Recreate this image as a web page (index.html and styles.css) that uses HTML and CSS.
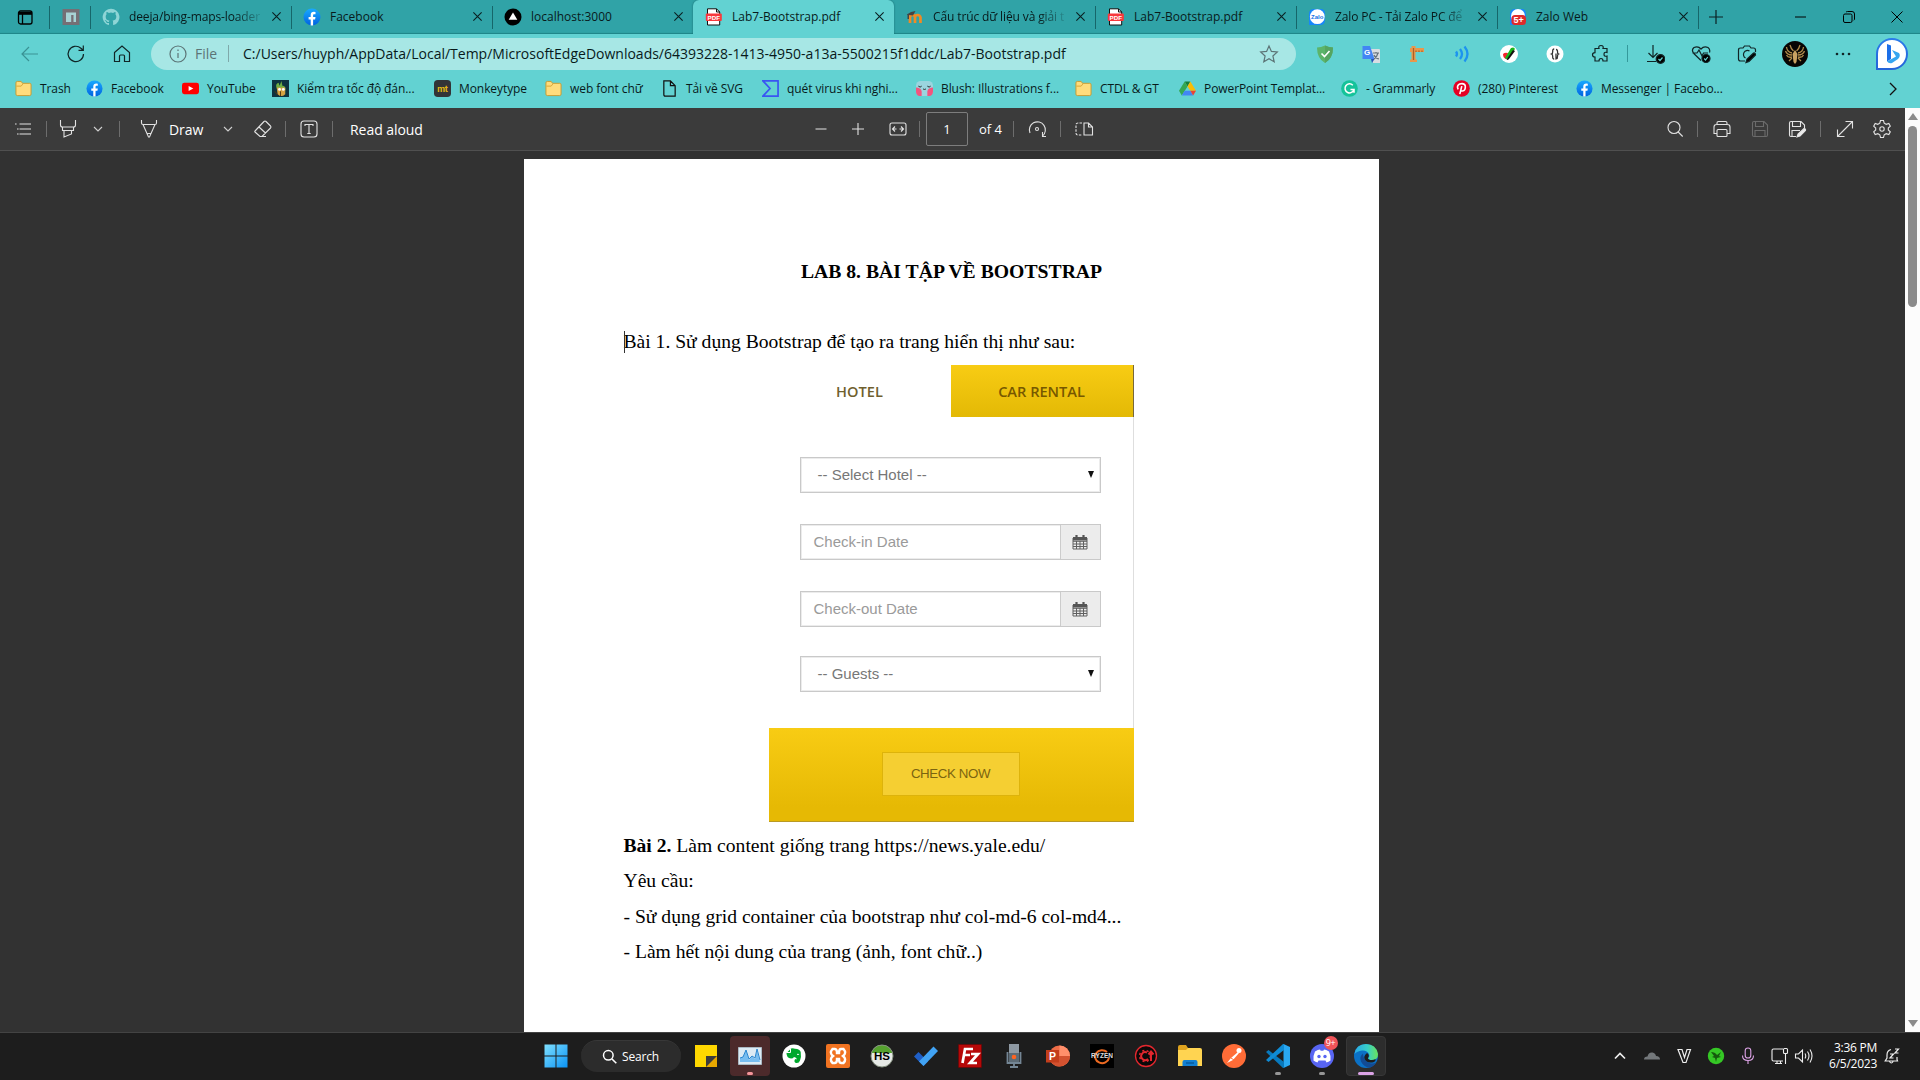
FILE: index.html
```html
<!DOCTYPE html>
<html lang="vi">
<head>
<meta charset="utf-8">
<title>Lab7-Bootstrap.pdf</title>
<link rel="stylesheet" href="styles.css">
</head>
<body>
<svg class="defs" width="0" height="0">
  <defs>
    <linearGradient id="fbg" x1="0" y1="0" x2="0" y2="1"><stop offset="0" stop-color="#19aaff"/><stop offset="1" stop-color="#0062e0"/></linearGradient>
    <linearGradient id="win" x1="0" y1="0" x2="1" y2="1"><stop offset="0" stop-color="#7fe0ff"/><stop offset="1" stop-color="#0a93f5"/></linearGradient>
    <linearGradient id="edge" x1="0" y1="0" x2="1" y2="0"><stop offset="0" stop-color="#2aa9e8"/><stop offset=".55" stop-color="#38cfc8"/><stop offset="1" stop-color="#6ae35a"/></linearGradient>
    <linearGradient id="bing" x1="0" y1="0" x2="0" y2="1"><stop offset="0" stop-color="#2b7bea"/><stop offset="1" stop-color="#2464d8"/></linearGradient>
    <symbol id="fb" viewBox="0 0 18 18"><circle cx="9" cy="9" r="8.5" fill="url(#fbg)"/><path d="M7.7 17.4v-6H5.6V8.9h2.1V7.1c0-2.2 1.2-3.3 3.2-3.3l1.6.1v2.3h-1.2c-1 0-1.2.5-1.2 1.3v1.4h2.4l-.4 2.5h-2v6z" fill="#fff"/></symbol>
    <symbol id="pdf" viewBox="0 0 18 18"><path d="M2.500.8h9l3.200 3.200v13H2.500z" fill="#fff" stroke="#111"/><path d="M11.500.8V4h3.200" fill="none" stroke="#111"/><rect x=".8" y="5.500" width="16" height="7.500" rx="1" fill="#f8383c"/><text x="8.800" y="11.500" font-family="Liberation Sans" font-weight="bold" font-size="6.200" fill="#fff" text-anchor="middle">PDF</text></symbol>
    <symbol id="folder" viewBox="0 0 18 18"><path d="M1 3q0-1.500 1.500-1.500h4L8 3.500h7.500Q17 3.500 17 5v10q0 1.500-1.500 1.500h-13Q1 16.500 1 15z" fill="#ffdc7c" stroke="#c99a2e"/><path d="M1.500 6.500h5l2-2.500" fill="none" stroke="#d9a637"/></symbol>
    <symbol id="close" viewBox="0 0 12 12"><path d="M1.500 1.500l9 9M10.500 1.500l-9 9" fill="none" stroke="#0a2022" stroke-width="1.200"/></symbol>
    <symbol id="chev" viewBox="0 0 10 10"><path d="M1 3l4 4 4-4" fill="none" stroke="#d0d0d0"/></symbol>
    <symbol id="cal" viewBox="0 0 16 16"><path d="M1 4h14v11H1zM1 7.300h14M1 10h14M1 12.500h14M4.500 7v8M8 7v8M11.500 7v8" fill="none" stroke="#606060"/><path d="M1 3h14v3.500H1z" fill="#555"/><path d="M4.500 1v3.500M11.500 1v3.500" stroke="#555" stroke-width="2.200"/></symbol>
  </defs>
</svg>

<header class="tabs">
  <div class="tab-actions"><svg width="17" height="17" viewBox="0 0 17 17"><rect x="1.500" y="2" width="13.500" height="13" rx="2" fill="none" stroke="#000" stroke-width="1.300"/><path d="M2 3h13v2.800H2z"/><path d="M5.500 5v10" stroke="#000" stroke-width="1.300"/></svg></div>
  <div class="tab pinned"><svg width="18" height="18" viewBox="0 0 18 18"><path d="M.5 1h17v16H.5z" fill="#756f75"/><path d="M4 4.500h10V14h-2.500V7H9.200v7H4z" fill="#a7d3d5"/></svg></div>
  <div class="tab"><svg class="fav" viewBox="0 0 18 18"><path d="M9 .8a8.300 8.300 0 0 0-2.600 16.200c.4.100.6-.2.600-.4v-1.700c-2.400.5-2.900-1-2.900-1-.4-1-.9-1.300-.9-1.300-.8-.5 0-.5 0-.5.900 0 1.300.9 1.300.9.800 1.300 2 1 2.500.7 0-.5.300-.9.500-1.100-1.800-.2-3.800-.9-3.800-4.100 0-.9.300-1.600.9-2.200-.1-.2-.4-1.100 0-2.200 0 0 .7-.2 2.300.8a8 8 0 0 1 4.200 0c1.600-1 2.300-.8 2.300-.8.400 1.100.100 2 0 2.200.6.600.9 1.300.9 2.200 0 3.200-2 3.900-3.800 4.100.3.300.6.800.6 1.600v2.400c0 .2.200.5.600.4A8.300 8.300 0 0 0 9 .8z" fill="#8ed5d6"/></svg><span class="tab-title fade">deeja/bing-maps-loader</span><svg class="x"><use href="#close"/></svg></div>
  <div class="tab"><svg class="fav"><use href="#fb"/></svg><span class="tab-title">Facebook</span><svg class="x"><use href="#close"/></svg></div>
  <div class="tab"><svg class="fav" viewBox="0 0 18 18"><circle cx="9" cy="9" r="8.500"/><path d="M9 4.500l4.300 7.300H4.700z" fill="#fff"/></svg><span class="tab-title">localhost:3000</span><svg class="x"><use href="#close"/></svg></div>
  <div class="tab active"><svg class="fav"><use href="#pdf"/></svg><span class="tab-title">Lab7-Bootstrap.pdf</span><svg class="x"><use href="#close"/></svg></div>
  <div class="tab"><svg class="fav" viewBox="0 0 18 18"><path d="M4 15V9.500q0-2.500 2.500-2.500T9 9.500V15M9 9.500Q9 7 11.500 7T14.500 9.500V15" fill="none" stroke="#f08a24" stroke-width="2.700"/><path d="M.8 6.500Q5 3 9.500 3L7 7.500 3 7v4H1.500V7z" fill="#444"/></svg><span class="tab-title fade">Cấu trúc dữ liệu và giải t</span><svg class="x"><use href="#close"/></svg></div>
  <div class="tab"><svg class="fav"><use href="#pdf"/></svg><span class="tab-title">Lab7-Bootstrap.pdf</span><svg class="x"><use href="#close"/></svg></div>
  <div class="tab"><svg class="fav" viewBox="0 0 18 18"><path d="M1 6q0-5 5-5h7q4 0 4 5v6q0 5-5 5H1z" fill="#1787fb"/><circle cx="9.300" cy="8.700" r="7.400" fill="#fff"/><text x="9.200" y="11" font-family="Liberation Sans" font-weight="bold" font-size="6" fill="#1473e6" text-anchor="middle">Zalo</text></svg><span class="tab-title fade">Zalo PC - Tải Zalo PC để</span><svg class="x"><use href="#close"/></svg></div>
  <div class="tab"><svg class="fav" viewBox="0 0 18 18"><path d="M1 6q0-5 5-5h7q4 0 4 5v6q0 5-5 5H1z" fill="#1787fb"/><circle cx="9" cy="8" r="7" fill="#fff"/><rect x="2.500" y="7" width="14.500" height="10" rx="3.500" fill="#df2a2a"/><text x="9.700" y="15" font-family="Liberation Sans" font-weight="bold" font-size="9" fill="#fff" text-anchor="middle">5+</text></svg><span class="tab-title">Zalo Web</span><svg class="x"><use href="#close"/></svg></div>
  <div class="new-tab"><svg width="16" height="16" viewBox="0 0 16 16"><path d="M8 1v14M1 8h14" stroke="#0a2022" stroke-width="1.200"/></svg></div>
  <div class="window-controls">
    <svg viewBox="0 0 14 14"><path d="M1 7h11" stroke="#000"/></svg>
    <svg viewBox="0 0 14 14"><rect x="1.500" y="4" width="8.500" height="8.500" rx="1.500" fill="none" stroke="#000"/><path d="M4 2.200q.5-.7 1.500-.7H10q2.500 0 2.500 2.500V9q0 .8-.7 1.300" fill="none" stroke="#000"/></svg>
    <svg viewBox="0 0 14 14"><path d="M1.500 1.500l11 11M12.500 1.500l-11 11" stroke="#000"/></svg>
  </div>
</header>

<nav class="toolbar">
  <div class="slot dim"><svg viewBox="0 0 20 20"><path d="M18 10H2M9 3l-7 7 7 7"/></svg></div>
  <div class="slot"><svg viewBox="0 0 20 20"><path d="M17.500 10a7.700 7.700 0 1 1-2.600-5.800L17 6M17.300 1.500V6.300h-4.800"/></svg></div>
  <div class="slot"><svg viewBox="0 0 20 20"><path d="M2.500 8.500L10 2l7.500 6.500V17.500h-5V12q0-1-1-1h-3q-1 0-1 1v5.500h-5z"/></svg></div>
  <div class="address">
    <svg viewBox="0 0 20 20"><circle cx="10" cy="10" r="8"/><path d="M10 9v5M10 5.600v1.500"/></svg>
    <span class="scheme">File</span><span class="url">C:/Users/huyph/AppData/Local/Temp/MicrosoftEdgeDownloads/64393228-1413-4950-a13a-5500215f1ddc/Lab7-Bootstrap.pdf</span>
    <svg class="star" viewBox="0 0 20 20"><path d="M10 2l2.400 5.400 5.900.6-4.400 4 1.300 5.800L10 14.800l-5.200 3 1.300-5.800-4.400-4 5.900-.6z"/></svg>
  </div>
  <div class="extensions">
    <div class="slot"><svg class="solid" viewBox="0 0 20 20"><path d="M10 1.500q4 2 8 2 0 11-8 15.500Q2 14.500 2 3.500q4 0 8-2z" fill="#5cb46a"/><path d="M10 1.500q4 2 8 2 0 11-8 15.500z" fill="#55a561"/><path d="M6.500 9.500l3 3 5-5.500" fill="none" stroke="#fff" stroke-width="1.600"/></svg></div>
    <div class="slot"><svg class="solid" viewBox="0 0 20 20"><path d="M7 5h11q1 0 1 1v13h-7z" fill="#d9dde2"/><path d="M1.500 2H9l4.500 13h-12z" fill="#4285f4"/><path d="M10 15h3.500L11 19z" fill="#2850b4"/><text x="3" y="11" font-family="Liberation Sans" font-weight="bold" font-size="8" fill="#fff">G</text><path d="M12 9h6M15 8v1M17 9q-1 4-4 6M13 11q1 3 5 4" fill="none" stroke="#66727d"/></svg></div>
    <div class="slot"><svg class="solid" viewBox="0 0 20 20"><path d="M3 4h14v4H3zM4.500 2h4v14h-4zM3 15.500h7V18H3z" fill="#e9974b"/><path d="M9 8V6.500M12 8V6.500M15 8V6.500M6.500 4v12" stroke="#a5612b"/></svg></div>
    <div class="slot"><svg class="solid" viewBox="0 0 20 20"><path d="M3 7.500q2 2.500 0 5M7 5q4 5 0 10M11.500 2.500q6 7.500 0 15" fill="none" stroke="#1c93ef" stroke-width="2.300"/></svg></div>
    <div class="slot"><svg class="solid" viewBox="0 0 20 20"><circle cx="10" cy="10" r="9" fill="#fff"/><path d="M4 10q2-2 5-1l-2 6q-3-1-3-5z" fill="#f5222d"/><path d="M6 14L12 4q3-1.500 4 1l-7 9q-1.500 2-3 0z" fill="#16b51a"/><path d="M7.500 15.500L14 6l2 1-6 8q-1.500 1.500-2.500.5z" fill="#111"/></svg></div>
    <div class="slot"><svg class="solid" viewBox="0 0 20 20"><circle cx="10" cy="10" r="8.500" fill="#fff"/><path d="M9.200 5Q7.500 5 7.700 7.500 7.800 9.500 6.500 10q1.300.5 1.200 2.500Q7.500 15 9.200 15M11 5.500q1.800.2 1.500 2.500-.1 1.500 1 2-1.100.5-1 2.500.2 2-1.500 2.500V9.500" fill="none" stroke="#333" stroke-width="1.300"/></svg></div>
    <div class="slot"><svg viewBox="0 0 20 20"><path d="M4 4.500h4q-1-3 2-3t2 3h4v4q-3-1-3 1.700t3 1.800v5h-4q0-2.500-2-2.500T8 17H4v-4q-2.500 0-2.500-2.200T4 8.600z"/></svg></div>
  </div>
  <i class="divider"></i>
  <div class="slot"><svg viewBox="0 0 20 20"><path d="M8 1v12M3.500 9L8 13.500 12.500 9M2 17.500h9"/><circle cx="15.500" cy="15" r="4.300" fill="#000"/><path d="M13.500 15l1.500 1.500 2.500-3" stroke="#62d2d2"/></svg></div>
  <div class="slot"><svg viewBox="0 0 20 20"><path d="M10 16.500L2.800 9.500Q0 6 3 3.500 7 1.500 10 5q3-3.500 7-1.500 2.500 2 1.500 5M1.500 9H6l2-3 3 6 1.500-3H17"/><circle cx="15" cy="14.500" r="4" fill="#000"/><path d="M13.200 14.500l1.300 1.500 2.300-3" stroke="#62d2d2"/></svg></div>
  <div class="slot"><svg viewBox="0 0 20 20"><path d="M8 17H3.500Q1.500 17 1.500 15V6q0-2 2-2H6l1.500-2h5L14 4h2.500q2 0 2 2v2M12.500 7a4 4 0 1 0-4 7"/><path d="M9 18.500l1-3.500 6.500-6q2-.5 2 2L12 17.500z" fill="#000"/></svg></div>
  <div class="slot avatar-slot"><svg class="avatar" viewBox="0 0 26 26"><circle cx="13" cy="13" r="13" fill="#080604"/><path d="M10 12Q5 11 4.500 6M10 14Q5 14 3.500 10M10 16q-4 1-5.500-2M16 12q5-1 5.500-6M16 14q5 0 6.500-4M16 16q4 1 5.500-2M8 4q1 4 3.500 6M18 4q-1 4-3.500 6M7 20l3-3M19 20l-3-3" fill="none" stroke="#b08b4a" stroke-width="1.300"/><path d="M13 9l2.500 4-1 8L13 23l-1.500-2-1-8z" fill="#c9a262"/></svg></div>
  <div class="slot dots-slot"><svg class="solid" viewBox="0 0 20 20"><circle cx="4" cy="10" r="1.300"/><circle cx="10" cy="10" r="1.300"/><circle cx="16" cy="10" r="1.300"/></svg></div>
  <div class="slot bing-slot"><svg class="bing" viewBox="0 0 34 34"><path d="M2 32V17A15 15 0 1 1 17 32z" fill="#fff" stroke="url(#bing)" stroke-width="2"/><path d="M12 7l4 1.500V22l-4 2.500z" fill="#1b6fe8"/><path d="M17 13l7 3q2 3-1 6l-6 4q-3 1-5-1.500l9-5z" fill="#35a6f0"/></svg></div>
</nav>

<nav class="bookmarks">
  <a><svg><use href="#folder"/></svg>Trash</a>
  <a><svg><use href="#fb"/></svg>Facebook</a>
  <a><svg viewBox="0 0 18 18"><rect y="3" width="18" height="12" rx="2.500" fill="#f00"/><path d="M7 6.300l5 2.700-5 2.700z" fill="#fff"/></svg>YouTube</a>
  <a><svg viewBox="0 0 18 18"><path d="M0 0h18v18H0z" fill="#0d3340"/><path d="M5 9q-2-5 2-6l1 3 2-5 1 5q4 0 3 5z" fill="#6eae43"/><path d="M5 8h9v7q-4 4-8 0z" fill="#d4a342"/><circle cx="8" cy="10" r="1.500" fill="#fff"/><circle cx="12" cy="10" r="1.500" fill="#fff"/><path d="M9 12v5M3 12l3 4" stroke="#513711"/></svg>Kiểm tra tốc độ đán...</a>
  <a><svg viewBox="0 0 18 18"><rect width="18" height="18" rx="4" fill="#323437"/><text x="9" y="12.500" font-family="Roboto" font-weight="bold" font-size="9.500" fill="#e2b714" text-anchor="middle">mt</text></svg>Monkeytype</a>
  <a><svg><use href="#folder"/></svg>web font chữ</a>
  <a><svg viewBox="0 0 18 18"><path d="M3 1h7l5 5v11H4.500Q3 17 3 15.500zM10 1v5h5" fill="none" stroke="#111" stroke-width="1.300"/></svg>Tải về SVG</a>
  <a><svg viewBox="0 0 18 18"><path d="M1 1h16v16H1l7.500-8z" fill="none" stroke="#3a55f2" stroke-width="1.800"/></svg>quét virus khi nghi...</a>
  <a><svg viewBox="0 0 18 18"><rect y="1" width="18" height="16" rx="5" fill="#9bd5df"/><path d="M0 8q5 0 6 4v5H3q-3-1-3-5zM18 8q-5 0-6 4v5h3q3-1 3-5z" fill="#f2557f"/><path d="M2.500 6.500q2 2 3.500 0M12 6.500q2 2 3.500 0M7.500 9.500q1.500 1 3 0" fill="none" stroke="#222"/></svg>Blush: Illustrations f...</a>
  <a><svg><use href="#folder"/></svg>CTDL &amp; GT</a>
  <a><svg viewBox="0 0 18 18"><path d="M6 1.500h6l-3 5.300z" fill="#188038"/><path d="M6 1.500l3 5.300-6 9.700-3-5z" fill="#34a853"/><path d="M12 1.500l6 10h-6L9 6.800z" fill="#fbbc04"/><path d="M6 11.500h6l3 5H3z" fill="#4285f4"/><path d="M12 11.500h6l-3 5z" fill="#ea4335"/></svg>PowerPoint Templat...</a>
  <a><svg viewBox="0 0 18 18"><circle cx="9" cy="9" r="8.800" fill="#15c39a"/><path d="M12.500 5.500a4.800 4.800 0 1 0 1.200 4.500H10M13.800 10v3.500" fill="none" stroke="#fff" stroke-width="1.600"/></svg>- Grammarly</a>
  <a><svg viewBox="0 0 18 18"><circle cx="9" cy="9" r="8.800" fill="#e60023"/><path d="M5.500 10Q3.500 6 7 4.200q5-1.400 6 2 .5 5-3 5.500-1.500 0-2-1M9.300 6.500L7.200 15" fill="none" stroke="#fff" stroke-width="1.700"/></svg>(280) Pinterest</a>
  <a><svg><use href="#fb"/></svg>Messenger | Facebo...</a>
  <svg class="more" viewBox="0 0 14 14"><path d="M4 1l6 6-6 6" fill="none" stroke="#111" stroke-width="1.300"/></svg>
</nav>

<main class="viewer">
  <div class="viewer-body">
    <div class="pdfbar">
      <div class="group left">
        <div class="cell w46"><svg viewBox="0 0 20 20"><path d="M6.500 5H18M6.500 10H18M6.500 15H18M2 5h1.600M4 10h1.600M4 15h1.600"/></svg></div><i></i>
        <div class="cell w42"><svg viewBox="0 0 20 20"><path d="M2.500 1v5q0 2 2 2h11q2 0 2-2V1M4.500 8v3.500h11V8M6 11.500V18l7.500-3v-3.500"/></svg></div>
        <div class="cell w17"><svg class="chev"><use href="#chev"/></svg></div><i class="after-highlight"></i>
        <div class="cell pen"><svg viewBox="0 0 20 20"><path d="M2.500 1v3q0 1.500 1.500 1.500h12q1.500 0 1.500-1.500V1M4 5.500L9.500 18h1L16 5.500M8 14.500h4"/></svg></div>
        <span class="draw">Draw</span>
        <div class="cell w21"><svg class="chev"><use href="#chev"/></svg></div>
        <div class="cell eraser"><svg viewBox="0 0 20 20"><path d="M2 12L11 2.500q1-1 2 0l4.500 4.500q1 1 0 2L9 17.500H7l-5-4.500q-.5-.5 0-1zM6 8l6.500 6M8 17.500h5"/></svg></div><i class="after-eraser"></i>
        <div class="cell w46"><svg viewBox="0 0 20 20"><rect x="2" y="2" width="16" height="16" rx="3"/><path d="M6 7V5.500h8V7M10 5.500v9M8.300 14.500h3.400"/></svg></div><i></i>
        <span class="read">Read aloud</span>
      </div>
      <div class="group middle">
        <div class="cell w39 faded"><svg viewBox="0 0 20 20"><path d="M4.500 10h11" stroke-width="1.800"/></svg></div>
        <div class="cell w36"><svg viewBox="0 0 20 20"><path d="M10 4v12M4 10h12"/></svg></div>
        <div class="cell w43"><svg viewBox="0 0 20 20"><rect x="2" y="4" width="16" height="12" rx="2"/><path d="M4.500 10h4M11.500 10h4M7 7.500L4.500 10 7 12.500M13 7.500l2.500 2.500-2.500 2.500"/></svg></div><i></i>
        <span class="page-input">1</span><span class="of">of 4</span><i></i>
        <div class="cell w46"><svg viewBox="0 0 20 20"><path d="M3 14A8 8 0 1 1 15.500 17M15.500 13v4.500H19"/><circle cx="10" cy="10" r="1.500"/></svg></div><i></i>
        <div class="cell w46"><svg viewBox="0 0 20 20"><path d="M8 4H4Q2 4 2 6v8q0 2 2 2h4" stroke-dasharray="2.500 1.200"/><path d="M10 4h4.500l4 4v8H10zM14.500 4v4h4"/></svg></div>
      </div>
      <div class="group right">
        <div class="cell w45"><svg viewBox="0 0 20 20"><circle cx="9" cy="8.500" r="6"/><path d="M13.200 13l4.500 4.500"/></svg></div><i></i>
        <div class="cell w47"><svg viewBox="0 0 20 20"><path d="M5 5.500V4q0-1.500 1.500-1.500h7Q15 2.500 15 4v1.500M5 14.500H2V8q0-2.500 2.500-2.500h11Q18 5.500 18 8v6.500h-3"/><rect x="5" y="10.500" width="10" height="7" rx="1"/></svg></div>
        <div class="cell w29 disabled"><svg viewBox="0 0 20 20"><path d="M2.500 4Q2.500 2.500 4 2.500h10l3.500 3.500v10q0 1.500-1.500 1.500H4Q2.500 17.500 2.500 16zM5.500 2.500v5h8v-5M5 17.500v-6h10v6"/></svg></div>
        <div class="cell w46"><svg viewBox="0 0 20 20"><path d="M9 17.500H4Q2.500 17.500 2.500 16V4Q2.500 2.500 4 2.500h10l3.500 3.500v3M5.500 2.500v5h8v-5M5 17.500v-6h8"/><path d="M10 18l1-3 6-5.500q2 0 1.500 2L13 17z" fill="#eee"/></svg></div><i></i>
        <div class="cell w48"><svg viewBox="0 0 20 20"><path d="M2.500 17.500l15-15M10.500 2.500h7v7M2.500 10.500v7h7"/></svg></div>
        <div class="cell w25"><svg viewBox="0 0 20 20"><path d="M8.500 1.500h3l.7 2.700 2 1.100 2.600-.8 1.500 2.700-2 1.800v2l2 1.800-1.500 2.700-2.600-.8-2 1.100-.7 2.700h-3l-.7-2.700-2-1.100-2.600.8-1.500-2.700 2-1.800V9l-2-1.800 1.500-2.700 2.600.8 2-1.100z"/><circle cx="10" cy="10" r="2.200"/></svg></div>
      </div>
    </div>
    <div class="canvas">
      <article class="page">
        <h1>LAB 8. BÀI TẬP VỀ BOOTSTRAP</h1>
        <p class="first">Bài 1. Sử dụng Bootstrap để tạo ra trang hiển thị như sau:</p>
        <section class="booking">
          <div class="booking-tabs"><span>HOTEL</span><span class="selected">CAR RENTAL</span></div>
          <div class="booking-form">
            <div class="field select"><span>-- Select Hotel --</span><b></b></div>
            <div class="field date"><span>Check-in Date</span><em><svg><use href="#cal"/></svg></em></div>
            <div class="field date"><span>Check-out Date</span><em><svg><use href="#cal"/></svg></em></div>
            <div class="field select guests"><span>-- Guests --</span><b></b></div>
          </div>
          <div class="booking-footer"><span>CHECK NOW</span></div>
        </section>
        <p><strong>Bài 2.</strong> Làm content giống trang https://news.yale.edu/</p>
        <p>Yêu cầu:</p>
        <p>- Sử dụng grid container của bootstrap như col-md-6 col-md4...</p>
        <p>- Làm hết nội dung của trang (ảnh, font chữ..)</p>
      </article>
    </div>
  </div>
  <div class="scrollbar"><i class="up"></i><i class="thumb"></i><i class="down"></i></div>
</main>

<footer class="taskbar">
  <div class="apps">
    <div class="start"><svg width="24" height="24" viewBox="0 0 24 24"><path d="M.5.500h11v11H.5zM12.500.500h11v11h-11zM.5 12.500h11v11H.5zM12.500 12.500h11v11h-11z" fill="url(#win)"/></svg></div>
    <div class="search"><svg width="15" height="15" viewBox="0 0 15 15"><circle cx="6.300" cy="6.300" r="4.800" fill="none" stroke="#fff" stroke-width="1.500"/><path d="M10 10l4.300 4.300" stroke="#fff" stroke-width="1.600"/></svg>Search</div>
    <div class="app"><svg viewBox="0 0 24 24"><path d="M1 1h22v22H1z" fill="#ffd800"/><path d="M12 12h11v11H12z" fill="#e8a800"/><path d="M12 12h11L12 23z" fill="#3c3c3c"/></svg></div>
    <div class="app hot"><svg viewBox="0 0 24 24"><path d="M.5 3.500h23v17H.5z" fill="#dceaf4" stroke="#aab8c3"/><path d="M2 18v-4l3-1 3-7 3 10 3-4 3 3 2-9 3 12z" fill="#78bdf0"/><path d="M2 14l3-1 3-7 3 9 3-3 3 2 2-9 3 11" fill="none" stroke="#2b86cf"/></svg><u></u></div>
    <div class="app"><svg viewBox="0 0 24 24"><circle cx="12" cy="12" r="11.500" fill="#fff"/><path d="M4.500 9L9 4.500q2-.8 4 .2 5 .3 5.700 3.300.8 5-.7 8.500-1 3-4 2.500-2.300-1-1.200-3.500 1-1 2.200 0-.5-2.500-3-2.500-1 1.500-3 1.500Q4.500 14 4.500 9z" fill="#00a82d"/><path d="M4.500 8.500h4V5" fill="none" stroke="#fff"/><path d="M15 10.500q1.500-1 2 .5" fill="none" stroke="#fff"/></svg></div>
    <div class="app"><svg viewBox="0 0 24 24"><rect width="24" height="24" rx="2" fill="#f17321"/><path d="M9 5H6.500Q3 9 7 12q-4 3-.5 7H9q2 0 2-4h2q0 4 2 4h2.500q3.500-4-.5-7 4-3 .5-7H15q-2 0-2 4h-2q0-4-2-4z" fill="none" stroke="#fff" stroke-width="2.400"/></svg></div>
    <div class="app"><svg viewBox="0 0 24 24"><circle cx="12" cy="12" r="11" fill="#e6e9e6"/><path d="M1.500 9Q4 1 12 1t10.500 8z" fill="#55a12e"/><circle cx="12" cy="12" r="11" fill="none" stroke="#84907f"/><text x="12" y="16" font-family="Liberation Sans" font-weight="bold" font-size="11.500" text-anchor="middle">HS</text></svg></div>
    <div class="app"><svg viewBox="0 0 24 24"><path d="M0 12.500L4.500 8 14 17.500l-4.500 4.500z" fill="#1f5fc7"/><path d="M5 17.500L19.500 2.500 24 7 9.500 22z" fill="#41a3f4"/></svg></div>
    <div class="app"><svg viewBox="0 0 24 24"><path d="M.5.500h23v23H.5z" fill="#b60808" stroke="#6b0000" stroke-dasharray="1 1"/><path d="M4.500 19L7 5h8M6 11h6M13 10h7l-8 9h7" fill="none" stroke="#fff" stroke-width="2.700"/></svg></div>
    <div class="app"><svg viewBox="0 0 24 24"><path d="M7 0h10v18H7z" fill="#8e99a3"/><path d="M5.500 8v11h13V8M12 19v4M8 23h8" fill="none" stroke="#748695" stroke-width="1.800"/><path d="M7 9h10v9H7z" fill="#5d6b76"/><circle cx="12" cy="13" r="2.300" fill="#ff6421"/></svg></div>
    <div class="app"><svg viewBox="0 0 24 24"><circle cx="13.500" cy="12" r="10.500" fill="#ed6c47"/><path d="M13.500 1.500A10.500 10.500 0 0 1 24 12H13.500z" fill="#ff8f6b"/><path d="M24 12a10.500 10.500 0 0 1-19 6l8.500-6z" fill="#d35230"/><path d="M0 6h13v12.500H0z" fill="#c43e1c"/><text x="6.500" y="16.200" font-family="Liberation Sans" font-weight="bold" font-size="10.500" fill="#fff" text-anchor="middle">P</text></svg></div>
    <div class="app"><svg viewBox="0 0 24 24"><path d="M0 0h24v24H0z"/><path d="M17 8A7 6.500 0 1 0 19 14" fill="none" stroke="#ed6a22" stroke-width="2"/><text x="12" y="14.300" font-family="Liberation Sans" font-weight="bold" font-size="6.500" fill="#ddd" text-anchor="middle" textLength="22">RYZEN</text></svg></div>
    <div class="app"><svg viewBox="0 0 24 24"><circle cx="12" cy="12" r="10.500" fill="#0c0909" stroke="#e3272e" stroke-width="1.300"/><path d="M13 8.500a4 4 0 1 0 1 6.500M17 17V8M14.500 10.500L17 7.500l2.500 3" fill="none" stroke="#e3272e" stroke-width="2"/><circle cx="11" cy="12" r="5.500" fill="none" stroke="#e3272e" stroke-width="1.500" stroke-dasharray="2 2.500"/></svg></div>
    <div class="app"><svg viewBox="0 0 24 24"><path d="M0 3q0-2 2-2h6l2 3h12v7H0z" fill="#dfa31e"/><path d="M0 6h8l2-2h12q2 0 2 2v16H0z" fill="#ffd451"/><path d="M4.500 22v-4q0-2 2-2h11q2 0 2 2v4z" fill="#1280d2"/><path d="M8 19h8" stroke="#075b9d" stroke-width="1.500"/></svg></div>
    <div class="app"><svg viewBox="0 0 24 24"><circle cx="12" cy="12" r="12" fill="#ff6c37"/><path d="M5 19l4-5 7-6 1 1-6 7z" fill="#fff"/><circle cx="17" cy="6.500" r="2.500" fill="#fff"/><path d="M9 14l3 2" stroke="#ff6c37"/></svg></div>
    <div class="app"><svg viewBox="0 0 24 24"><path d="M17.500 0L24 3v18l-6.500 3z" fill="#29a8f2"/><path d="M0 8l2.500-2L18 18v6h-1z" fill="#0879bd"/><path d="M0 16l2.500 2L18 6V0h-1z" fill="#0f8bd4"/></svg><u class="dim-dot"></u></div>
    <div class="app"><svg viewBox="0 0 24 24"><circle cx="12" cy="12" r="12" fill="#5865f2"/><path d="M5 7.500q3-2 5-2l.7 1.300h2.600L14 5.500q2 0 5 2 2 4 1.500 9-2 1.500-4 2l-1-2H8.500l-1 2q-2-.5-4-2Q3 11.500 5 7.500z" fill="#fff"/><circle cx="9" cy="12.500" r="1.700" fill="#5865f2"/><circle cx="15" cy="12.500" r="1.700" fill="#5865f2"/></svg><span class="badge">9+</span><u class="dim-dot"></u></div>
    <div class="app current"><svg viewBox="0 0 24 24"><circle cx="12" cy="12" r="12" fill="#0b71c6"/><path d="M.5 10Q2 0 12 0q10 0 12 10 0 6-6 6-4 0-4-2 2-1 1-4-2-4-7-3.500Q3 7 .5 10z" fill="url(#edge)"/><path d="M9 9.500q-4 3-2 8 3 6 9 6 4-1 6-5-4 2-8 0-5-3-5-9z" fill="#124b94"/><path d="M13 9q3 2 1 5 0 2 4 2 2 0 3.500-1 .5 2-1.500 3-5 1.500-8-1-4-4 1-8z" fill="#1d1d1d"/></svg><u class="wide"></u></div>
  </div>
  <div class="tray">
    <svg viewBox="0 0 20 20"><path d="M5 12.500l5-5 5 5" stroke-width="1.700"/></svg>
    <svg viewBox="0 0 20 20"><path d="M2 13.500q0-3 3.500-3 1-4.500 5-4 3 .5 3.500 3.500 4 0 4 3.500z" fill="#73777a" stroke="none"/></svg>
    <svg viewBox="0 0 20 20"><path d="M4 3.500h4l2.500 8 2.500-8h3.500L12 16.500H9z" stroke-width="1.200"/></svg>
    <svg viewBox="0 0 20 20"><circle cx="10" cy="10" r="8.200" fill="#35c825" stroke="none"/><path d="M5 6q4 0 6 3l4-3-2 4 2 1-4 1-1 4-1-4-3-1 2-1z" fill="#145b0d" stroke="none"/></svg>
    <svg class="mic" viewBox="0 0 20 20"><rect x="7.200" y="2" width="5.600" height="10" rx="2.800"/><path d="M4.500 9.500q0 5 5.500 5t5.500-5M10 14.500V18"/></svg>
    <svg viewBox="0 0 20 20"><path d="M13 3H3.500Q2 3 2 4.500v9Q2 15 3.500 15H13M5 17.500h7M7 15v2.500M10.500 15v2.500"/><rect x="13.500" y="2.500" width="4" height="5" rx="1"/><path d="M15.500 7.500V18"/></svg>
    <svg class="speaker" viewBox="0 0 20 20"><path d="M2.500 8h3l4-4v12l-4-4h-3zM12 7.500q1.500 2.500 0 5M14.500 5.500q3 4.500 0 9M17 3.500q4 6.500 0 13"/></svg>
    <div class="clock"><span>3:36 PM</span><span>6/5/2023</span></div>
    <svg class="bell" viewBox="0 0 20 20"><path d="M9 3.500Q5 4.500 5 9v3l-1.800 3h12.300L15 13.500V11M7.500 15.500q1.800 3 3.600 0M8 8h3.500L8 12h3.500M13 3h3.500L13 7h3.500" stroke-width="1.200"/></svg>
  </div>
</footer>
</body>
</html>
```
FILE: styles.css
```css
* { box-sizing: border-box; }
body { margin: 0; width: 1920px; height: 1080px; overflow: hidden; display: flex; flex-direction: column; font-family: "Open Sans", "Noto Sans", sans-serif; font-size: 12px; color: #081a1b; background: #323232; }
svg { flex: none; display: block; }
.defs { position: absolute; }

.tabs { display: flex; height: 34px; flex: none; background: #30a3a7; box-shadow: inset 0 -2px 1px -1px #1f8488; }
.tab-actions { width: 49px; padding-left: 17px; display: flex; align-items: center; }
.tab { width: 201px; display: flex; align-items: center; padding: 0 0 1px 11px; border-left: 1px solid transparent; border-image: linear-gradient(transparent 20%, #16666a 20%, #16666a 82%, transparent 82%) 1; }
.tab.pinned { width: 41px; padding-left: 12px; }
.fav { width: 18px; height: 18px; }
.tab-title { width: 136px; margin-left: 9px; overflow: hidden; white-space: nowrap; font-size: 12px; }
.fade { letter-spacing: -.12px; -webkit-mask-image: linear-gradient(90deg, #000 105px, transparent 136px); mask-image: linear-gradient(90deg, #000 105px, transparent 136px); }
.x { width: 11px; height: 11px; margin-left: 6px; }
.tab.active { background: #62d2d2; border-image: none; border-radius: 6px 6px 0 0; box-shadow: 0 0 2px #14666a; clip-path: inset(0 -2px 0 -2px); }
.tab.active + .tab { border-image: none; }
.new-tab { width: 37px; padding-left: 9px; display: flex; align-items: center; border-left: 1px solid transparent; border-image: linear-gradient(transparent 20%, #16666a 20%, #16666a 82%, transparent 82%) 1; }
.window-controls { flex: 1; display: flex; justify-content: flex-end; align-items: center; gap: 34px; padding-right: 16px; }
.window-controls svg { width: 14px; height: 14px; }

.toolbar { height: 40px; flex: none; display: flex; align-items: center; padding: 0 0 1px 6.5px; background: #62d2d2; }
.slot { width: 46px; display: flex; justify-content: center; }
.slot svg, .address svg { width: 20px; height: 20px; fill: none; stroke: #102526; stroke-width: 1.2; }
.slot svg.solid { stroke: none; fill: #102526; }
.slot.dim svg { stroke: #3a9294; }
.address { width: 1145px; height: 32px; margin-left: 6.5px; border-radius: 16px; background: #a7e7e5; display: flex; align-items: center; padding: 0 17px 0 17px; }
.address svg { stroke: #5c7476; }
.scheme { font-size: 14px; color: #5c7476; width: 34px; margin-left: 7px; height: 17px; line-height: 17px; border-right: 1px solid #7fa9aa; }
.url { flex: 1; margin-left: 14px; font-size: 14px; white-space: nowrap; }
.extensions { display: flex; margin-left: 6px; }
.divider { width: 1px; height: 17px; background: #34999b; margin: 0 4px 0 3px; }
.avatar-slot { width: 49px; padding-left: 1px; }
.dots-slot { width: 48px; }
.bing-slot { width: 50px; }
.slot svg.avatar { width: 26px; height: 26px; stroke: none; }
.slot svg.bing { width: 34px; height: 34px; stroke: none; }

.bookmarks { height: 34px; flex: none; display: grid; align-items: center; padding: 0 0 5px 15px; background: #62d2d2; grid-template-columns: 71px 96px 90px 162px 111px 116px 101px 154px 159px 104px 162px 112px 123px 310px 20px; }
.bookmarks a { display: flex; align-items: center; gap: 8px; white-space: nowrap; font-size: 12px; letter-spacing: -.08px; }
.bookmarks a svg { width: 17px; height: 17px; }
.bookmarks .more { width: 14px; height: 14px; }

.viewer { flex: 1; min-height: 0; display: flex; }
.viewer-body { width: 1905px; display: flex; flex-direction: column; }
.pdfbar { height: 43px; flex: none; display: flex; background: #3b3b3b; border-bottom: 1px solid #505050; color: #fff; font-size: 14px; letter-spacing: -.05px; }
.group { display: flex; align-items: center; }
.group > i { width: 1px; height: 16px; background: #6d6d6d; }
.left { width: 801px; }
.middle { width: 851px; }
.cell { display: flex; justify-content: center; }
.cell svg { width: 20px; height: 20px; fill: none; stroke: #e2e2e2; stroke-width: 1.1; }
.cell svg.chev { width: 10px; height: 10px; }
.w17 { width: 17px; } .w21 { width: 21px; } .w25 { width: 25px; } .w29 { width: 29px; }
.w36 { width: 36px; } .w39 { width: 39px; } .w42 { width: 42px; } .w43 { width: 43px; }
.w45 { width: 45px; } .w46 { width: 46px; } .w47 { width: 47px; } .w48 { width: 48px; }
.after-highlight { margin-left: 13px; }
.pen { width: 21px; margin-left: 18px; }
.draw { width: 48px; margin-left: 10px; }
.eraser { width: 40px; margin-left: 5px; }
.after-eraser { margin-left: 2px; }
.read { margin-left: 17px; }
.faded svg { stroke: #9a9a9a; }
.disabled svg { stroke: #6b6b6b; }
.page-input { width: 42px; height: 34px; line-height: 33px; margin-left: 6px; border: 1px solid #7d7d7d; border-radius: 2px; text-align: center; font-size: 13px; }
.of { width: 34px; margin-left: 11px; font-size: 13px; }
.canvas { flex: 1; min-height: 0; overflow: hidden; background: #323232; display: flex; justify-content: center; padding: 8px 2px 0 0; }
.page { width: 855px; background: #fff; color: #000; padding: 94px 99.5px 0; font-family: "Liberation Serif", serif; font-size: 19.6px; }
.page h1 { margin: 0; font-size: 19.7px; line-height: 36px; text-align: center; white-space: nowrap; }
.page p { margin: 0; line-height: 35.6px; white-space: nowrap; }
.page .first { margin-top: 35px; position: relative; }
.first::before { content: ""; position: absolute; left: 0; top: 7px; width: 1px; height: 22px; background: #333; }
.booking { width: 365px; height: 457px; margin: 5px 0 6px 145px; display: flex; flex-direction: column; font-family: "Liberation Sans", sans-serif; }
.booking-tabs { display: flex; height: 52px; font: 600 14.6px "Open Sans", sans-serif; color: #6f5f2e; }
.booking-tabs span { width: 182px; text-align: center; line-height: 52px; }
.booking-tabs .selected { width: 183px; color: #765800; background: linear-gradient(#f8cc14, #e3b905); border-right: 1px solid #77683a; }
.booking-form { height: 311px; padding: 40px 32px 0 31px; border-right: 1px solid #dedede; }
.field { height: 36px; margin-bottom: 31px; border: 1px solid #c9c9c9; box-shadow: inset 0 0 0 1px #ececec; display: flex; align-items: center; justify-content: space-between; font-size: 15px; color: #777; }
.field.select { padding: 0 6px 0 17px; }
.field.date { padding-left: 13px; color: #9a9a9a; }
.field.guests { margin-top: -2px; }
.field b { border: 3.5px solid transparent; border-top: 7px solid #111; border-bottom: 0; }
.field em { width: 40px; height: 34px; background: #ececec; border-left: 1px solid #ccc; display: flex; align-items: center; justify-content: center; }
.field em svg { width: 16px; height: 16px; }
.booking-footer { height: 94px; display: flex; justify-content: center; align-items: center; padding-right: 1px; background: linear-gradient(#f8cc14, #e6b904 85%); border-bottom: 1px solid #b99a23; }
.booking-footer span { width: 138px; height: 44px; line-height: 42px; text-align: center; background: #f5cf32; border: 1px solid #ddb30b; font-size: 13.3px; letter-spacing: -.4px; color: #7b6410; }
.scrollbar { width: 15px; background: #fcfcfc; display: flex; flex-direction: column; align-items: center; padding: 5px 0; }
.up { border: 5px solid transparent; border-bottom: 7px solid #8b8b8b; border-top: 0; }
.thumb { width: 9px; height: 181px; margin-top: 6px; border-radius: 5px; background: #8b8b8b; }
.down { margin-top: auto; border: 5px solid transparent; border-top: 7px solid #8b8b8b; border-bottom: 0; }

.taskbar { height: 48px; flex: none; display: flex; padding-bottom: 1px; background: #1d1d1d; border-top: 1px solid #434343; color: #fff; }
.apps { width: 1060px; margin-left: 543.5px; display: flex; align-items: center; }
.start { width: 37px; }
.search { width: 100px; height: 32px; margin-right: 3px; border-radius: 16px; background: #2c2c2c; border-top: 1px solid #383838; display: flex; align-items: center; justify-content: center; gap: 5px; font-size: 12px; letter-spacing: -.2px; }
.app { width: 44px; height: 40px; display: flex; align-items: center; justify-content: center; position: relative; }
.app > svg { width: 24px; height: 24px; }
.hot, .current { width: 40px; margin: 0 2px; border-radius: 4px; background: #4c2a2b; }
.current { background: #2d2d2d; border: 1px solid #373737; }
.app u { position: absolute; bottom: 1px; width: 6px; height: 3px; border-radius: 2px; background: #f5959a; }
.app u.dim-dot { background: #969696; }
.app u.wide { bottom: 0; width: 16px; background: #dba3e6; }
.badge { position: absolute; top: 0; right: 6px; width: 14px; height: 14px; border-radius: 7px; background: #ef5459; font-size: 9px; line-height: 13px; text-align: center; letter-spacing: -.3px; }
.tray { display: flex; align-items: center; width: 316px; padding-left: .5px; }
.tray svg { width: 20px; height: 20px; margin: 0 6px; fill: none; stroke: #eee; stroke-width: 1.1; }
.tray svg.mic { stroke: #dda3e6; }
.tray svg.speaker { margin: 0 0 0 -3px; }
.clock { width: 64px; display: flex; flex-direction: column; text-align: right; font-size: 12px; line-height: 16px; letter-spacing: -.25px; }
.tray svg.bell { margin: 0 0 0 5px; }
```
